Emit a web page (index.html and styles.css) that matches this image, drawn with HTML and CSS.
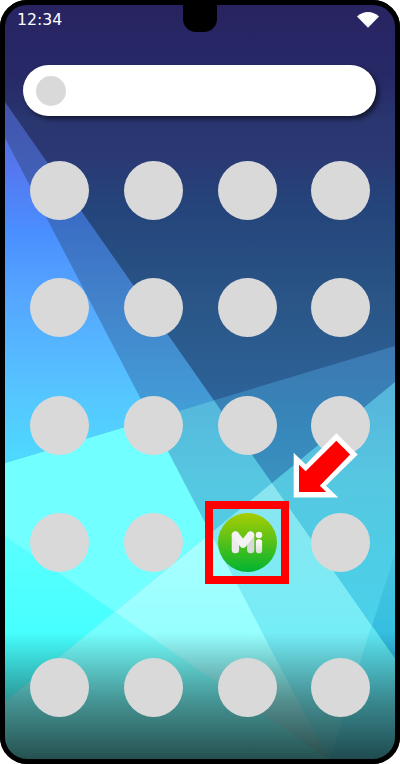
FILE: index.html
```html
<!DOCTYPE html>
<html lang="en">
<head>
<meta charset="utf-8">
<title>Home screen</title>
<link rel="stylesheet" href="styles.css">
</head>
<body>
<main class="phone">
  <svg class="wallpaper" viewBox="5 5 390 754" preserveAspectRatio="none" aria-hidden="true">
    <defs>
      <linearGradient id="navy" gradientUnits="userSpaceOnUse" x1="0" y1="0" x2="0" y2="500">
        <stop offset="0" stop-color="#282361"/><stop offset=".15" stop-color="#272967"/><stop offset=".2" stop-color="#28306c"/><stop offset=".24" stop-color="#29366f"/><stop offset=".3" stop-color="#2b3773"/><stop offset=".42" stop-color="#24457b"/><stop offset=".6" stop-color="#2a5586"/><stop offset=".8" stop-color="#2c6399"/>
      </linearGradient>
      <linearGradient id="blue" gradientUnits="userSpaceOnUse" x1="0" y1="100" x2="0" y2="420">
        <stop offset="0" stop-color="#4254ad"/><stop offset=".22" stop-color="#415fb6"/><stop offset=".38" stop-color="#3b6ec5"/><stop offset=".65" stop-color="#4384cb"/><stop offset="1" stop-color="#42a0d8"/>
      </linearGradient>
      <linearGradient id="sky" gradientUnits="userSpaceOnUse" x1="0" y1="130" x2="0" y2="470">
        <stop offset="0" stop-color="#5271df"/><stop offset=".12" stop-color="#5578f0"/><stop offset=".3" stop-color="#4a8fff"/><stop offset=".5" stop-color="#55a7ff"/><stop offset=".8" stop-color="#55c8ff"/><stop offset="1" stop-color="#4cdcff"/>
      </linearGradient>
      <linearGradient id="steel" gradientUnits="userSpaceOnUse" x1="0" y1="346" x2="0" y2="483">
        <stop offset="0" stop-color="#3d78b2"/><stop offset=".5" stop-color="#3784b9"/><stop offset="1" stop-color="#3992c0"/>
      </linearGradient>
      <linearGradient id="teal" gradientUnits="userSpaceOnUse" x1="0" y1="380" x2="0" y2="630">
        <stop offset="0" stop-color="#56b3da"/><stop offset=".4" stop-color="#56c7e1"/><stop offset="1" stop-color="#48d2ea"/>
      </linearGradient>
      <linearGradient id="ice" gradientUnits="userSpaceOnUse" x1="0" y1="480" x2="0" y2="758">
        <stop offset="0" stop-color="#8ce4ef"/><stop offset=".57" stop-color="#74eef7"/><stop offset="1" stop-color="#6cecf2"/>
      </linearGradient>
      <linearGradient id="pale" gradientUnits="userSpaceOnUse" x1="0" y1="520" x2="0" y2="758">
        <stop offset="0" stop-color="#acffff"/><stop offset=".5" stop-color="#96ffff"/><stop offset="1" stop-color="#80e4e4"/>
      </linearGradient>
      <linearGradient id="aqua" gradientUnits="userSpaceOnUse" x1="0" y1="530" x2="0" y2="640">
        <stop offset="0" stop-color="#5affff"/><stop offset="1" stop-color="#46ffff"/>
      </linearGradient>
      <linearGradient id="mint" gradientUnits="userSpaceOnUse" x1="0" y1="610" x2="0" y2="758">
        <stop offset="0" stop-color="#75ffff"/><stop offset="1" stop-color="#6ff8f6"/>
      </linearGradient>
      <linearGradient id="lagoon" gradientUnits="userSpaceOnUse" x1="0" y1="555" x2="0" y2="655">
        <stop offset="0" stop-color="#48c5df"/><stop offset="1" stop-color="#31bce0"/>
      </linearGradient>
      <linearGradient id="shade" gradientUnits="userSpaceOnUse" x1="0" y1="632" x2="0" y2="759">
        <stop offset="0" stop-color="#000" stop-opacity="0"/><stop offset=".55" stop-color="#0a0a0a" stop-opacity=".43"/><stop offset="1" stop-color="#020202" stop-opacity=".68"/>
      </linearGradient>
      <clipPath id="lower"><path d="M5 463 395 346V760H5Z"/></clipPath>
      <clipPath id="rise"><path d="M5 702 395 382V760H5Z"/></clipPath>
    </defs>
    <path fill="url(#navy)" d="M5 5H395V759H5Z"/>
    <path fill="url(#blue)" d="M5 102 395 659V759H5Z"/>
    <path fill="url(#sky)" d="M5 138 328 759H5Z"/>
    <g clip-path="url(#lower)">
      <path fill="url(#steel)" d="M5 5H395V759H5Z"/>
      <path fill="url(#teal)" d="M5 102 395 659V759H5Z"/>
      <path fill="#72ffff" d="M5 138 328 759H5Z"/>
    </g>
    <path fill="url(#aqua)" d="M5 536 328 759H5Z"/>
    <g clip-path="url(#rise)">
      <path fill="url(#teal)" d="M5 5H395V759H5Z"/>
      <path fill="url(#lagoon)" d="M395 553 330 759H395Z"/>
      <path fill="url(#ice)" d="M5 102 395 659V759H5Z"/>
      <path fill="#5ce6f2" d="M371.5 625.5 395 659V759H330Z"/>
      <path fill="url(#pale)" d="M5 138 328 759H5Z"/>
      <path fill="url(#mint)" d="M5 536 328 759H5Z"/>
    </g>
    <path fill="url(#shade)" d="M0 632H400V764H0Z"/>
  </svg>

  <header class="status">
    <time class="clock">12:34</time>
    <svg class="wifi" viewBox="0 0 22 16" aria-hidden="true"><path d="M0 4.6Q4.8 0 11 0T22 4.6L11 15.8Z"/></svg>
  </header>
  <div class="notch"></div>

  <div class="search"><span class="search-dot"></span></div>

  <section class="apps">
    <i class="app"></i><i class="app"></i><i class="app"></i><i class="app"></i>
    <i class="app"></i><i class="app"></i><i class="app"></i><i class="app"></i>
    <i class="app"></i><i class="app"></i><i class="app"></i><i class="app"></i>
    <i class="app"></i><i class="app"></i>
    <div class="app app-mi">
      <svg class="mi" viewBox="0 0 59 59" aria-hidden="true">
        <defs>
          <linearGradient id="stem" x1="0" y1="0" x2="0" y2="1"><stop offset="0" stop-color="#fff"/><stop offset="1" stop-color="#dcdcdc"/></linearGradient>
        </defs>
        <rect x="13.7" y="18.5" width="7.4" height="21.7" rx="3.5" fill="#ebebeb"/>
        <rect x="29.1" y="18.5" width="7.2" height="21.7" rx="3.5" fill="#d9d9d9"/>
        <path d="M17.5 22 25.1 31.3 32.5 22" fill="none" stroke="#f3f3f3" stroke-width="7.2" stroke-linecap="round" stroke-linejoin="round"/>
        <circle cx="41" cy="22" r="3.2" fill="#f5f5f5"/>
        <rect x="37.9" y="26.2" width="6.2" height="14" rx="2.8" fill="url(#stem)"/>
      </svg>
      <span class="highlight"></span>
      <svg class="arrow" viewBox="293 432 66 67" aria-hidden="true">
        <path fill="#fff" d="M336.3 433.3 357.7 454.5 326 485.7 338.3 497.6H293.7V452.7L305.7 464.5Z"/>
        <path fill="red" d="M336.3 440.7 350.2 454.5 319.8 485.7 326.2 492H299V464.7L305.7 471.3Z"/>
      </svg>
    </div>
    <i class="app"></i>
  </section>
  <nav class="apps dock">
    <i class="app"></i><i class="app"></i><i class="app"></i><i class="app"></i>
  </nav>
</main>
</body>
</html>
```
FILE: styles.css
```css
* { box-sizing: border-box; }
body { margin: 0; background: #fff; }

.phone {
  position: relative;
  width: 400px;
  height: 764px;
  border: 5px solid #000;
  border-radius: 27px;
  background: #000;
}
.phone::after {
  content: "";
  position: absolute;
  inset: -5px;
  border: 5px solid #000;
  border-radius: 27px;
  pointer-events: none;
}
.wallpaper {
  position: absolute;
  inset: 0;
  width: 390px;
  height: 754px;
  border-radius: 19px;
}
.status {
  position: relative;
  display: flex;
  justify-content: space-between;
  height: 60px;
  padding: 5px 16.5px 0 12px;
}
.clock {
  color: #fff;
  font: 15.7px/19px "DejaVu Sans", sans-serif;
}
.wifi {
  width: 22px;
  height: 16px;
  margin-top: 2px;
  fill: #fff;
}
.notch {
  position: absolute;
  top: -1px;
  left: 177.7px;
  width: 34.6px;
  height: 27.7px;
  border-radius: 0 0 13px 13px;
  background: #000;
}
.search {
  position: relative;
  display: flex;
  align-items: center;
  width: 352.7px;
  height: 50.7px;
  margin: .3px 0 0 18.3px;
  padding-left: 12.7px;
  border-radius: 26px;
  background: #fff;
  box-shadow: 3px 3px 5px rgba(0, 0, 0, .55);
}
.search-dot {
  width: 30px;
  height: 30px;
  border-radius: 50%;
  background: #d9d9d9;
}
.apps {
  position: relative;
  display: grid;
  grid-template-columns: repeat(4, 59px);
  column-gap: 34.8px;
  row-gap: 58.4px;
  margin: 45px 0 0 25px;
}
.dock { margin-top: 85.4px; }
.app {
  position: relative;
  height: 59px;
  border-radius: 50%;
  background: #d9d9d9;
}
.app-mi { background: linear-gradient(#a8cd00, #00b432); }
.mi { display: block; width: 59px; height: 59px; }
.highlight {
  position: absolute;
  top: -12.2px;
  left: -12.3px;
  width: 83.7px;
  height: 83px;
  border: 8px solid #f00;
}
.arrow {
  position: absolute;
  z-index: 1;
  top: -81.2px;
  left: 75.4px;
  width: 66px;
  height: 67px;
}
```
